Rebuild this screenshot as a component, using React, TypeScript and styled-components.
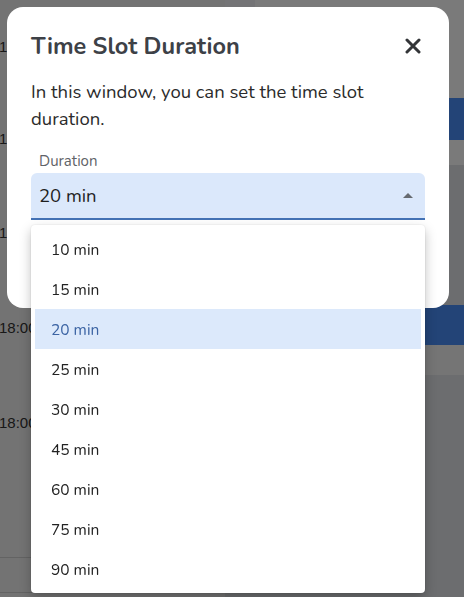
import React from 'react';
import styled, { createGlobalStyle } from 'styled-components';

const GlobalStyle = createGlobalStyle`
  html, body {
    margin: 0;
    padding: 0;
  }

  body {
    font-family: Nunito, Lato, "Noto Sans", sans-serif;
    overflow: hidden;
  }
`;

const Calendar = styled.div`
  display: grid;
  grid-template-columns: 225px 1fr;
  height: 100vh;
  background: #ffffff;
`;

const TimeColumn = styled.div`
  display: flex;
  flex-direction: column;
  background: #f0f0f0;
`;

const TimeRow = styled.div<{ $height: number; $line?: boolean }>`
  display: flex;
  align-items: center;
  flex-shrink: 0;
  height: ${(p) => p.$height}px;
  box-sizing: border-box;
  margin-left: -1px;
  font-family: "Liberation Sans", Arial, sans-serif;
  font-size: 15px;
  color: #333;
  border-bottom: ${(p) => (p.$line ? '1px solid #d0d0d0' : 'none')};
`;

const DayColumn = styled.div`
  display: flex;
  flex-direction: column;
`;

const DayBand = styled.div<{ $height: number; $tone: string }>`
  height: ${(p) => p.$height}px;
  flex-shrink: 0;
  background: ${(p) => p.$tone};
`;

const DayHeader = styled.div`
  display: flex;
  height: 98px;
  flex-shrink: 0;
  background: #ffffff;

  > span {
    width: 30px;
    height: 7px;
    background: #f2f3f6;
  }
`;

const Overlay = styled.div`
  position: fixed;
  inset: 0;
  background: rgba(0, 0, 0, 0.52);
`;

const Dialog = styled.div`
  position: fixed;
  top: 7px;
  left: 7px;
  width: 442px;
  height: 301px;
  box-sizing: border-box;
  padding: 23px 24px;
  background: #ffffff;
  border-radius: 16px;
`;

const Header = styled.div`
  display: flex;
  align-items: center;
  justify-content: space-between;
  height: 32px;
`;

const Title = styled.h2`
  margin: 0;
  font-size: 23.5px;
  font-weight: 700;
  color: #3d4147;
`;

const CloseButton = styled.button`
  display: flex;
  align-items: center;
  justify-content: center;
  width: 24px;
  height: 24px;
  padding: 0;
  border: none;
  background: none;
  cursor: pointer;
`;

const Text = styled.p`
  margin: 17px 0 0;
  font-size: 18.5px;
  line-height: 27px;
  color: #2b2b2b;
`;

const Field = styled.div`
  position: relative;
  margin-top: 18px;
`;

const Label = styled.div`
  padding-left: 8px;
  font-size: 15px;
  line-height: 20px;
  color: #5f6368;
`;

const Select = styled.div`
  display: flex;
  align-items: center;
  justify-content: space-between;
  height: 45px;
  margin-top: 2px;
  padding: 0 12px 0 8px;
  background: #dbe8fb;
  border-bottom: 2px solid #4472b5;
  border-radius: 6px 6px 0 0;
  font-size: 18.5px;
  color: #1f1f1f;
`;

const Caret = styled.span`
  width: 0;
  height: 0;
  border-left: 5px solid transparent;
  border-right: 5px solid transparent;
  border-bottom: 5px solid #666a70;
`;

const Menu = styled.ul`
  position: absolute;
  top: 74px;
  left: 0;
  right: 0;
  margin: 0;
  padding: 4px 0;
  list-style: none;
  background: #ffffff;
  border-radius: 4px;
  box-shadow: 0 5px 12px rgba(0, 0, 0, 0.25), 0 0 2px rgba(0, 0, 0, 0.12);
`;

const Option = styled.li<{ $selected?: boolean }>`
  display: flex;
  align-items: center;
  height: 40px;
  margin: 0 4px;
  padding-left: 16px;
  font-size: 15.5px;
  color: ${(p) => (p.$selected ? '#3b63a3' : '#222222')};
  background: ${(p) => (p.$selected ? '#dce9fb' : 'transparent')};
`;

const durations = [10, 15, 20, 25, 30, 45, 60, 75, 90];

export default function App() {
  const selected = 20;

  return (
    <>
      <GlobalStyle />
      <Calendar>
        <TimeColumn>
          <TimeRow $height={92}>17:00</TimeRow>
          <TimeRow $height={92}>17:00</TimeRow>
          <TimeRow $height={96}>17:00</TimeRow>
          <TimeRow $height={95}>18:00</TimeRow>
          <TimeRow $height={95}>18:00</TimeRow>
          <TimeRow $height={88} $line />
          <TimeRow $height={35} $line />
        </TimeColumn>
        <DayColumn>
          <DayHeader>
            <span />
          </DayHeader>
          <DayBand $height={42} $tone="#4a8ef8" />
          <DayBand $height={25} $tone="#ffffff" />
          <DayBand $height={140} $tone="#e2e4e9" />
          <DayBand $height={40} $tone="#4a8ef8" />
          <DayBand $height={30} $tone="#f4f4f4" />
          <DayBand $height={222} $tone="#e2e4e9" />
        </DayColumn>
      </Calendar>
      <Overlay />
      <Dialog role="dialog" aria-labelledby="slot-title">
        <Header>
          <Title id="slot-title">Time Slot Duration</Title>
          <CloseButton aria-label="Close">
            <svg width="16" height="16" viewBox="0 0 16 16">
              <path d="M2 2L14 14M14 2L2 14" stroke="#333538" strokeWidth="3" strokeLinecap="round" />
            </svg>
          </CloseButton>
        </Header>
        <Text>In this window, you can set the time slot duration.</Text>
        <Field>
          <Label>Duration</Label>
          <Select>
            <span>{selected} min</span>
            <Caret />
          </Select>
          <Menu role="listbox">
            {durations.map((d) => (
              <Option key={d} role="option" $selected={d === selected}>
                {d} min
              </Option>
            ))}
          </Menu>
        </Field>
      </Dialog>
    </>
  );
}
